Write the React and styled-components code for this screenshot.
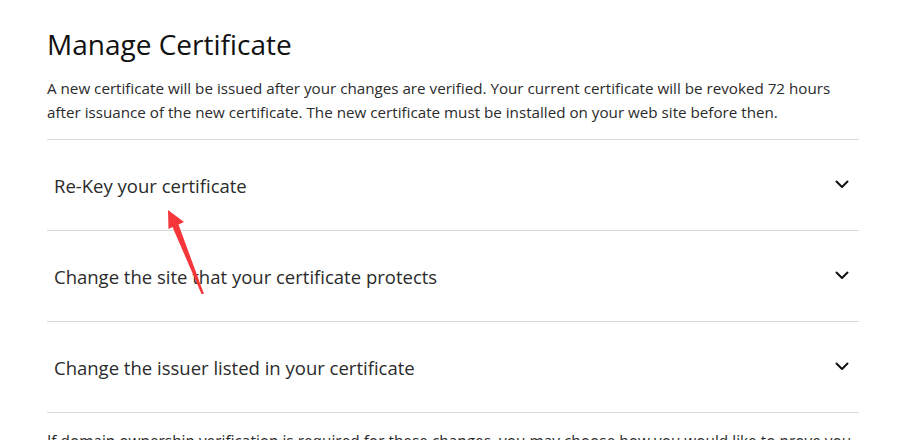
import React, { useState } from 'react';
import styled, { createGlobalStyle } from 'styled-components';

const GlobalStyle = createGlobalStyle`
    html, body {
        margin: 0;
        padding: 0;
        background: #fff;
    }
    body {
        font-family: "Open Sans", "Liberation Sans", sans-serif;
        color: #111;
    }
`;

const sections = [
    'Re-Key your certificate',
    'Change the site that your certificate protects',
    'Change the issuer listed in your certificate',
];

function Chevron() {
    return (
        <svg width="16" height="16" viewBox="0 0 16 16" fill="none">
            <path d="M2.5 5.5 L8 11 L13.5 5.5" stroke="#111" strokeWidth="2" strokeLinecap="round" strokeLinejoin="round" />
        </svg>
    );
}

function App() {
    const [open, setOpen] = useState(null);

    return (
        <Page>
            <GlobalStyle />
            <Title>Manage Certificate</Title>
            <Intro>
                A new certificate will be issued after your changes are verified. Your current certificate will be revoked 72 hours
                after issuance of the new certificate. The new certificate must be installed on your web site before then.
            </Intro>
            <Accordion>
                {sections.map((label, i) => (
                    <Item key={label}>
                        <Header onClick={() => setOpen(open === i ? null : i)}>
                            <span>{label}</span>
                            <ChevronWrap $open={open === i}>
                                <Chevron />
                            </ChevronWrap>
                        </Header>
                    </Item>
                ))}
            </Accordion>
            <Footnote>
                If domain ownership verification is required for these changes, you may choose how you would like to prove you
                control the domain.
            </Footnote>

            {/* annotation arrow drawn over the page */}
            <Annotation width="910" height="440" viewBox="0 0 910 440">
                <polygon
                    points="168,210 184,222 178.5,224.5 204,294 201.5,294 172.5,227 168.5,229"
                    fill="#f5363a"
                />
            </Annotation>
        </Page>
    );
}

const Page = styled.div`
    position: relative;
    width: 812px;
    height: 416px;
    overflow: hidden;
    padding: 24px 0 0 47px;
`;

const Title = styled.h1`
    margin: 0;
    font-size: 28px;
    font-weight: 400;
    line-height: 40px;
    color: #111;
`;

const Intro = styled.p`
    margin: 12px 0 0;
    font-size: 15.2px;
    line-height: 24px;
    color: #2b2b2b;
`;

const Accordion = styled.div`
    margin-top: 15px;
    border-top: 1px solid #d6d6d6;
`;

const Item = styled.div`
    border-bottom: 1px solid #d4dadf;
`;

const Header = styled.button`
    width: 100%;
    height: 90px;
    display: flex;
    align-items: center;
    justify-content: space-between;
    padding: 0 9px 0 7px;
    border: none;
    background: none;
    cursor: pointer;
    font-family: inherit;
    font-size: 18.5px;
    color: #2b2b2b;
    text-align: left;
`;

const ChevronWrap = styled.span`
    display: flex;
    margin-top: -2px;
    transform: rotate(${p => (p.$open ? '180deg' : '0deg')});
`;

const Footnote = styled.p`
    margin: 17px 0 0;
    font-size: 15.4px;
    line-height: 24px;
    color: #2b2b2b;
`;

const Annotation = styled.svg`
    position: absolute;
    left: 0;
    top: 0;
    pointer-events: none;
`;

export default App;
